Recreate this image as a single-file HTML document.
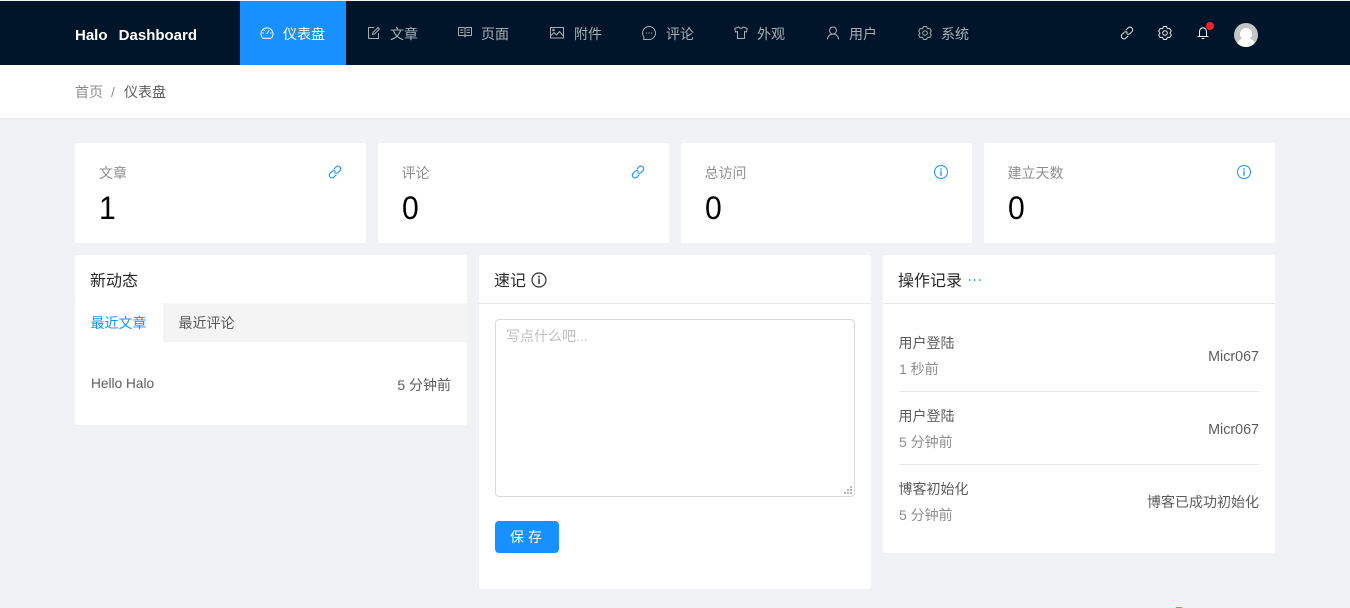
<!DOCTYPE html>
<html lang="zh-CN"><head><meta charset="utf-8"><title>Halo Dashboard</title>
<style>
html,body{margin:0;padding:0;width:1350px;height:608px;overflow:hidden;background:#f0f2f5;font-family:"Liberation Sans","Noto Sans CJK SC",sans-serif;font-size:14px;color:rgba(0,0,0,.65)}
.a{position:absolute;white-space:nowrap;line-height:20px}
.box{position:absolute;background:#fff;border-radius:2px}
svg{position:absolute;fill:none;stroke-linecap:round;stroke-linejoin:round}
.nav{color:rgba(255,255,255,.65);top:24px}
.lab{color:rgba(0,0,0,.45);top:163px}
.num{color:#000;font-size:32px;line-height:38px;top:189px;transform:scaleX(.94);transform-origin:0 0}
.h{color:rgba(0,0,0,.85);font-size:16px;line-height:24px;top:270px}
.line{position:absolute;height:1px;background:#e8e8e8}
</style></head><body>
<div style="position:absolute;left:0;top:0;width:1350px;height:1px;background:#f5f5f5"></div>
<div style="position:absolute;left:0;top:1px;width:1350px;height:64px;background:#001529"></div>
<div style="position:absolute;left:240px;top:1px;width:106px;height:64px;background:#1890ff"></div>
<div class="a" style="left:75px;top:26px;color:#fff;font-size:15px;font-weight:bold;word-spacing:7px">Halo Dashboard</div>

<svg style="left:260px;top:26px" width="14" height="14" viewBox="0 0 14 14" stroke="#fff" stroke-width="1"><path d="M3 12.300A6 6 0 1 1 11 12.300Z"/><path d="M7 7.500L9 4.500M2.800 7H3.500M10.500 7H11.200M4 4L4.500 4.500"/></svg>
<div class="a nav" style="left:283px;color:#fff">仪表盘</div>
<svg style="left:367px;top:26px" width="14" height="14" viewBox="0 0 14 14" stroke="#a6adb4" stroke-width="1"><path d="M11.500 7.500V12.500H1.500V1.500H7"/><path d="M5.500 8.500L6 6.500L11 1.500L12.500 3L7.500 8Z"/></svg>
<div class="a nav" style="left:390px">文章</div>
<svg style="left:458px;top:26px" width="14" height="13" viewBox="0 0 14 13" stroke="#a6adb4" stroke-width="1"><path d="M.5 1.500H5.500Q7 1.500 7 3Q7 1.500 8.500 1.500H13.500V9.500H8.500Q7 9.500 7 11Q7 9.500 5.500 9.500H.5ZM7 3V11M2.500 4H5M2.500 6.500H5M9 4H11.500M9 6.500H11.500"/></svg>
<div class="a nav" style="left:481px">页面</div>
<svg style="left:550px;top:27px" width="14" height="12" viewBox="0 0 14 12" stroke="#a6adb4" stroke-width="1"><path d="M.5 .5H13.500V11H.5Z"/><path d="M.5 9L4 5.500L6.500 8L9.500 4.500L13.500 9"/><circle cx="3.500" cy="3" r=".8"/></svg>
<div class="a nav" style="left:574px">附件</div>
<svg style="left:642px;top:26px" width="14" height="14" viewBox="0 0 14 14" stroke="#a6adb4" stroke-width="1"><path d="M7 .5A6.500 6.500 0 1 1 7 13.500H1.500L2 11A6.500 6.500 0 0 1 7 .5Z"/><path d="M4.300 7H4.700M6.800 7H7.200M9.300 7H9.700"/></svg>
<div class="a nav" style="left:666px">评论</div>
<svg style="left:734px;top:26px" width="14" height="14" viewBox="0 0 14 14" stroke="#a6adb4" stroke-width="1"><path d="M4.500 1L.8 2.500L1.500 6L3.500 5.500V12.500H10.500V5.500L12.500 6L13.200 2.500L9.500 1Q7 3.500 4.500 1Z"/></svg>
<div class="a nav" style="left:757px">外观</div>
<svg style="left:826px;top:26px" width="14" height="14" viewBox="0 0 14 14" stroke="#a6adb4" stroke-width="1"><circle cx="7" cy="4.500" r="3.500"/><path d="M1.500 13Q2 8.500 7 8Q12 8.500 12.500 13"/></svg>
<div class="a nav" style="left:849px">用户</div>
<svg style="left:918px;top:26px" width="14" height="14" viewBox="0 0 14 14" stroke="#a6adb4" stroke-width="1"><path d="M5.630 .54H8.370L9.500 2.670L11.900 2.580L13.280 4.960L12 7L13.280 9.040L11.900 11.420L9.500 11.330L8.370 13.460H5.630L4.500 11.330L2.100 11.420L.72 9.040L2 7L.72 4.960L2.100 2.580L4.500 2.670Z"/><circle cx="7" cy="7" r="2.300"/></svg>
<div class="a nav" style="left:941px">系统</div>

<svg style="left:1120px;top:26px" width="14" height="14" viewBox="0 0 14 14" stroke="#dfe2e5" stroke-width="1"><path d="M6 4L8.500 1.500Q10 .5 11.800 1.800Q13.300 3.500 12.300 5.300L9.800 7.800Q8.200 8.800 6.800 7.700"/><path d="M8 10L5.500 12.500Q4 13.500 2.200 12.200Q.7 10.500 1.700 8.700L4.200 6.200Q5.800 5.200 7.200 6.300"/></svg>
<svg style="left:1158px;top:26px" width="14" height="14" viewBox="0 0 14 14" stroke="#e6e8ea" stroke-width="1"><path d="M5.630 .54H8.370L9.500 2.670L11.900 2.580L13.280 4.960L12 7L13.280 9.040L11.900 11.420L9.500 11.330L8.370 13.460H5.630L4.500 11.330L2.100 11.420L.72 9.040L2 7L.72 4.960L2.100 2.580L4.500 2.670Z"/><circle cx="7" cy="7" r="2.300"/></svg>
<svg style="left:1197px;top:26px" width="13" height="14" viewBox="0 0 13 14" stroke="#eceef0" stroke-width="1"><path d="M2.500 10.500V6Q2.500 2 6 1.700Q9.500 2 9.500 6V10.500M1 10.500H11M5 12.500H7"/></svg>
<div style="position:absolute;left:1206px;top:22px;width:8px;height:8px;border-radius:50%;background:#f5222d"></div>
<div style="position:absolute;left:1234px;top:23px;width:24px;height:24px;border-radius:50%;background:#c4c4c4;overflow:hidden">
<div style="position:absolute;left:6px;top:5px;width:12px;height:12px;border-radius:50%;background:#fff"></div>
<div style="position:absolute;left:3px;top:15px;width:18px;height:14px;border-radius:50%;background:#fff"></div></div>

<div style="position:absolute;left:0;top:65px;width:1350px;height:53px;background:#fff;border-bottom:1px solid #e8e8e8"></div>
<div class="a" style="left:75px;top:82px;color:rgba(0,0,0,.45)">首页</div>
<div class="a" style="left:111px;top:82px;color:rgba(0,0,0,.45)">/</div>
<div class="a" style="left:124px;top:82px">仪表盘</div>

<div class="box" style="left:75px;top:143px;width:291px;height:100px"></div>
<div class="box" style="left:378px;top:143px;width:291px;height:100px"></div>
<div class="box" style="left:681px;top:143px;width:291px;height:100px"></div>
<div class="box" style="left:984px;top:143px;width:291px;height:100px"></div>
<div class="a lab" style="left:99px">文章</div><div class="a num" style="left:99px">1</div>
<div class="a lab" style="left:401.500px">评论</div><div class="a num" style="left:401.500px">0</div>
<div class="a lab" style="left:704.500px">总访问</div><div class="a num" style="left:704.500px">0</div>
<div class="a lab" style="left:1007.500px">建立天数</div><div class="a num" style="left:1007.500px">0</div>
<svg style="left:328px;top:165px" width="14" height="14" viewBox="0 0 14 14" stroke="#1890ff" stroke-width="1.100"><path d="M6 4L8.500 1.500Q10 .5 11.800 1.800Q13.300 3.500 12.300 5.300L9.800 7.800Q8.200 8.800 6.800 7.700"/><path d="M8 10L5.500 12.500Q4 13.500 2.200 12.200Q.7 10.500 1.700 8.700L4.200 6.200Q5.800 5.200 7.200 6.300"/></svg>
<svg style="left:631px;top:165px" width="14" height="14" viewBox="0 0 14 14" stroke="#1890ff" stroke-width="1.100"><path d="M6 4L8.500 1.500Q10 .5 11.800 1.800Q13.300 3.500 12.300 5.300L9.800 7.800Q8.200 8.800 6.800 7.700"/><path d="M8 10L5.500 12.500Q4 13.500 2.200 12.200Q.7 10.500 1.700 8.700L4.200 6.200Q5.800 5.200 7.200 6.300"/></svg>
<svg style="left:934px;top:165px" width="14" height="14" viewBox="0 0 14 14" stroke="#1890ff" stroke-width="1"><circle cx="7" cy="7" r="6.500"/><path d="M7 6.300V10.300M7 3.800V4.300" stroke-width="1.300"/></svg>
<svg style="left:1237px;top:165px" width="14" height="14" viewBox="0 0 14 14" stroke="#1890ff" stroke-width="1"><circle cx="7" cy="7" r="6.500"/><path d="M7 6.300V10.300M7 3.800V4.300" stroke-width="1.300"/></svg>

<div class="box" style="left:75px;top:255px;width:392px;height:170px"></div>
<div class="a h" style="left:90px">新动态</div>
<div style="position:absolute;left:75px;top:303px;width:392px;height:39px;background:#f4f4f4"></div>
<div style="position:absolute;left:75px;top:303px;width:88px;height:40px;background:#fff;border-radius:2px 2px 0 0"></div>
<div class="a" style="left:90.500px;top:313px;color:#1890ff">最近文章</div>
<div class="a" style="left:178.500px;top:313px">最近评论</div>
<div class="a" style="left:91px;top:374px;font-size:13.700px">Hello Halo</div>
<div class="a" style="right:899px;top:375px">5 分钟前</div>

<div class="box" style="left:479px;top:255px;width:392px;height:334px"></div>
<div class="a h" style="left:494px">速记</div>
<svg style="left:531px;top:272px" width="16" height="16" viewBox="0 0 16 16" stroke="#333" stroke-width="1.200"><circle cx="8" cy="8" r="7"/><path d="M8 7V11.500M8 4.300V5" stroke-width="1.500"/></svg>
<div class="line" style="left:479px;top:303px;width:392px"></div>
<div style="position:absolute;left:495px;top:319px;width:358px;height:176px;border:1px solid #d9d9d9;border-radius:4px;background:#fff"></div>
<div class="a" style="left:506px;top:326px;color:#bfbfbf">写点什么吧...</div>
<div style="position:absolute;left:850px;top:486px;width:2px;height:2px;background:#bbb"></div>
<div style="position:absolute;left:847px;top:489px;width:2px;height:2px;background:#bbb"></div>
<div style="position:absolute;left:850px;top:489px;width:2px;height:2px;background:#bbb"></div>
<div style="position:absolute;left:844px;top:492px;width:2px;height:2px;background:#bbb"></div>
<div style="position:absolute;left:847px;top:492px;width:2px;height:2px;background:#bbb"></div>
<div style="position:absolute;left:850px;top:492px;width:2px;height:2px;background:#bbb"></div>
<div style="position:absolute;left:495px;top:521px;width:64px;height:32px;background:#1890ff;border-radius:4px;box-shadow:0 2px 0 rgba(0,0,0,.015)"></div>
<div class="a" style="left:495px;top:527px;width:64px;text-align:center;color:#fff;letter-spacing:4px;text-indent:2px">保存</div>

<div class="box" style="left:883px;top:255px;width:392px;height:298px"></div>
<div class="a h" style="left:898px">操作记录</div>
<svg style="left:968px;top:278px" width="14" height="4" viewBox="0 0 14 4" stroke="#1890ff" stroke-width="1.500"><path d="M1.500 2H2M6.500 2H7M11.500 2H12"/></svg>
<div class="line" style="left:883px;top:303px;width:392px"></div>
<div class="a" style="left:898.500px;top:333px">用户登陆</div>
<div class="a" style="left:899px;top:359px;color:rgba(0,0,0,.45)">1 秒前</div>
<div class="a" style="right:91px;top:347px;font-size:14.300px">Micr067</div>
<div class="line" style="left:899px;top:391px;width:360px"></div>
<div class="a" style="left:898.500px;top:406px">用户登陆</div>
<div class="a" style="left:899px;top:432px;color:rgba(0,0,0,.45)">5 分钟前</div>
<div class="a" style="right:91px;top:420px;font-size:14.300px">Micr067</div>
<div class="line" style="left:899px;top:464px;width:360px"></div>
<div class="a" style="left:898.500px;top:479px">博客初始化</div>
<div class="a" style="left:899px;top:505px;color:rgba(0,0,0,.45)">5 分钟前</div>
<div class="a" style="right:91px;top:492px">博客已成功初始化</div>
<div style="position:absolute;left:1176px;top:607px;width:6px;height:1px;background:#e8764a"></div>
</body></html>
